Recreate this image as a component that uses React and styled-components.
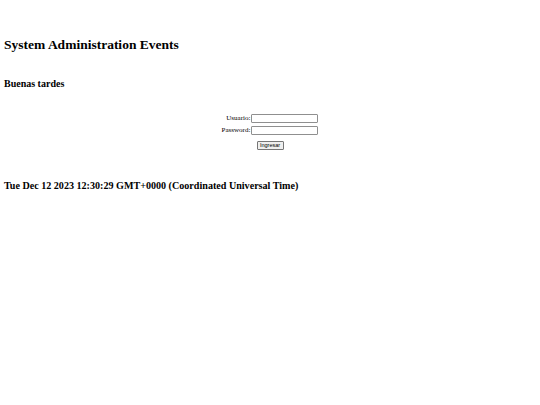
import React from 'react';
import styled, { createGlobalStyle } from 'styled-components';

const GlobalStyle = createGlobalStyle`
  html, body {
    margin: 0;
    background: #ffffff;
  }
  body {
    font-family: "Liberation Serif", "Times New Roman", serif;
    color: #000000;
  }
`;

const Page = styled.div`
  padding: 36.6px 4px 0;
  display: flex;
  flex-direction: column;
`;

const Title = styled.h2`
  margin: 0;
  font-size: 13.5px;
  line-height: 16px;
  font-weight: bold;
`;

const Greeting = styled.h3`
  margin: 25px 0 0;
  font-size: 10px;
  line-height: 12px;
  font-weight: bold;
`;

const LoginForm = styled.form`
  margin-top: 24.6px;
  display: flex;
  flex-direction: column;
  align-items: center;
`;

const FieldGrid = styled.div`
  display: grid;
  grid-template-columns: auto auto;
  row-gap: 2.4px;
  column-gap: 1px;
  align-items: center;
`;

const Label = styled.label`
  font-size: 7px;
  line-height: 9px;
  text-align: right;
`;

const Input = styled.input`
  box-sizing: border-box;
  width: 67px;
  height: 9px;
  margin: 0;
  padding: 0 2px;
  border: 1px solid #8f8f8f;
  border-radius: 1px;
  font-size: 6px;
`;

const Submit = styled.button`
  margin-top: 6px;
  box-sizing: border-box;
  width: 27px;
  height: 9px;
  padding: 0;
  font-family: "Liberation Sans", Arial, sans-serif;
  font-size: 5.5px;
  line-height: 7px;
  background: #efefef;
  border: 1px solid #767676;
  border-radius: 1px;
  color: #000;
`;

const Clock = styled.h3`
  margin: 30px 0 0;
  font-size: 10.1px;
  line-height: 12px;
  font-weight: bold;
`;

export default function App() {
  return (
    <>
      <GlobalStyle />
      <Page>
        <Title>System Administration Events</Title>
        <Greeting>Buenas tardes</Greeting>
        <LoginForm onSubmit={(e) => e.preventDefault()}>
          <FieldGrid>
            <Label htmlFor="usuario">Usuario:</Label>
            <Input id="usuario" type="text" />
            <Label htmlFor="password">Password:</Label>
            <Input id="password" type="password" />
          </FieldGrid>
          <Submit type="submit">Ingresar</Submit>
        </LoginForm>
        <Clock>Tue Dec 12 2023 12:30:29 GMT+0000 (Coordinated Universal Time)</Clock>
      </Page>
    </>
  );
}
